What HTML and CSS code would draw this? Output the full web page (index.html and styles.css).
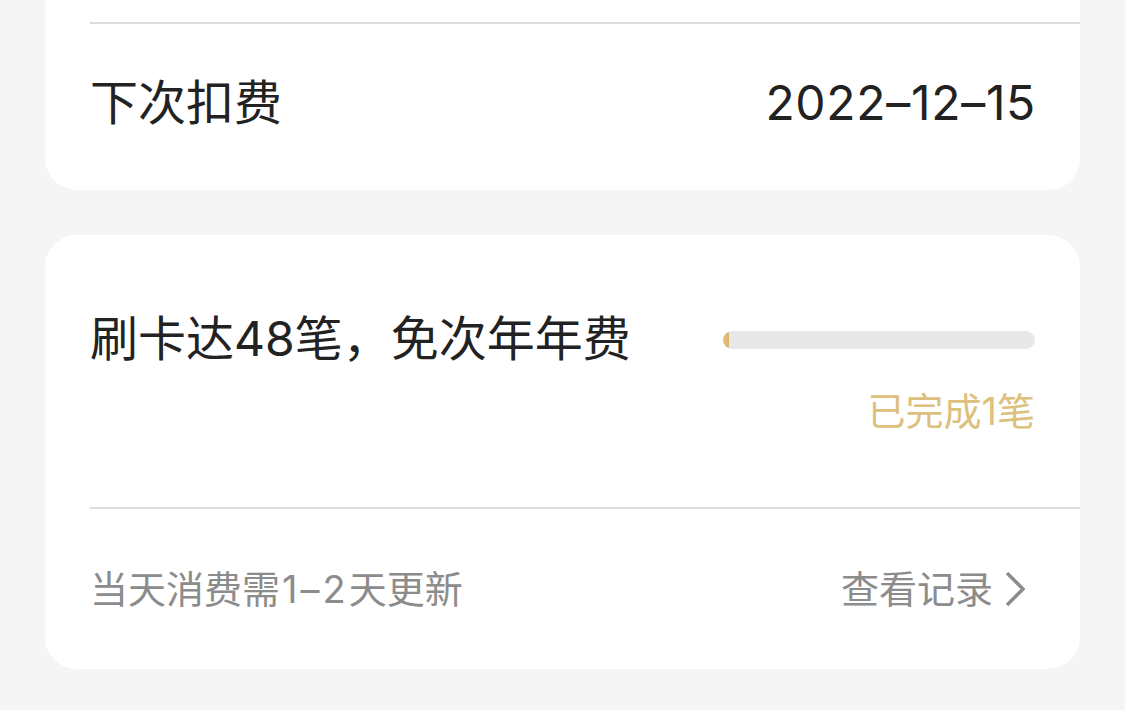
FILE: index.html
```html
<!DOCTYPE html>
<html lang="zh-CN">
<head>
    <meta charset="UTF-8">
    <meta name="viewport" content="width=device-width, initial-scale=1.0">
    <title>年费详情</title>
    <link rel="stylesheet" href="styles.css">
</head>
<body>
    <div class="card card-top">
        <div class="spacer"></div>
        <div class="row">
            <span class="label">下次扣费</span>
            <span class="value">2022–12–15</span>
        </div>
    </div>

    <div class="card">
        <div class="goal">
            <span class="label">刷卡达48笔，免次年年费</span>
            <div class="progress">
                <div class="track">
                    <div class="fill" style="width: 2%"></div>
                </div>
                <span class="done">已完成1笔</span>
            </div>
        </div>
        <div class="footer">
            <span class="hint">当天消费需<span class="num">1–2</span>天更新</span>
            <a class="more" href="#">查看记录
                <svg width="20" height="36" viewBox="0 0 20 36">
                    <path d="M2 2 L18 18 L2 34" fill="none" stroke="#8c8c8c" stroke-width="3.4"/>
                </svg>
            </a>
        </div>
    </div>
</body>
</html>
```

FILE: styles.css
```css
body {
    font-family: Inter, "Noto Sans CJK SC", sans-serif;
    background-color: #f5f5f5;
    margin: 0;
    padding: 0 45px;
    color: #222;
}

.card {
    background: #fff;
    border-radius: 32px;
    padding-left: 45px;
    margin-bottom: 45px;
}

.card-top {
    border-radius: 0 0 32px 32px;
}

.spacer {
    height: 22px;
}

.row {
    display: flex;
    justify-content: space-between;
    align-items: center;
    height: 158px;
    padding: 0 45px 8px 0;
    border-top: 2px solid #dedede;
}

.label {
    font-size: 48px;
    line-height: 48px;
}

.value {
    font-size: 48px;
    line-height: 48px;
    letter-spacing: 0.7px;
    margin-right: -1px;
}

.goal {
    display: flex;
    justify-content: space-between;
    align-items: flex-start;
    padding: 80px 45px 77px 0;
}

.progress {
    display: flex;
    flex-direction: column;
    align-items: flex-end;
    width: 312px;
}

.track {
    width: 100%;
    height: 18px;
    margin-top: 16px;
    border-radius: 9px;
    background: #e8e8e8;
    overflow: hidden;
}

.fill {
    height: 100%;
    min-width: 6px;
    border-radius: 9px;
    background: linear-gradient(90deg, #e7c37c, #d9b468);
}

.done {
    margin-top: 43px;
    font-size: 38px;
    line-height: 38px;
    color: #dcc07c;
}

.footer {
    display: flex;
    justify-content: space-between;
    align-items: center;
    height: 160px;
    padding-right: 55px;
    border-top: 2px solid #dedede;
}

.hint {
    font-size: 38px;
    line-height: 38px;
    color: #8c8c8c;
}

.hint .num {
    letter-spacing: 3px;
    margin-left: 2px;
}

.more {
    display: flex;
    align-items: center;
    gap: 12px;
    font-size: 38px;
    line-height: 38px;
    color: #8c8c8c;
    text-decoration: none;
}
```
